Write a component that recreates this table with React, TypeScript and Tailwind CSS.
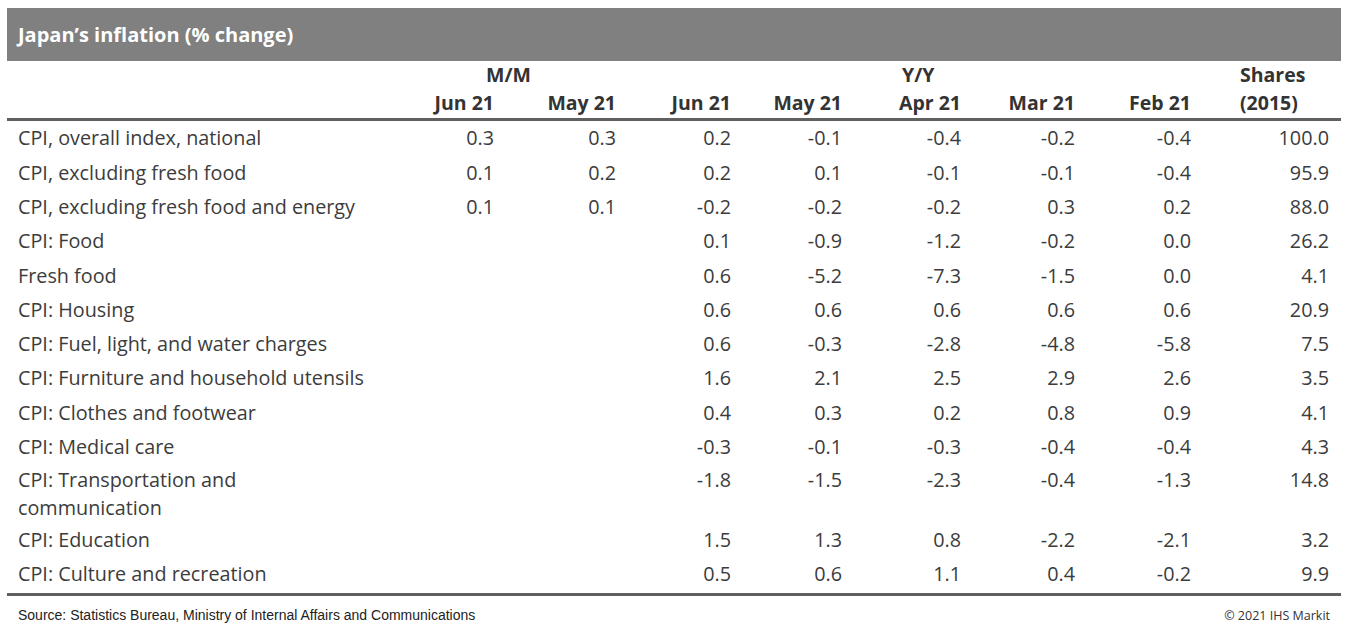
import React from 'react';

interface Row {
  label: React.ReactNode;
  mm: [string, string] | null;
  yy: [string, string, string, string, string];
  share: string;
  tall?: boolean;
}

const rows: Row[] = [
  { label: 'CPI, overall index, national', mm: ['0.3', '0.3'], yy: ['0.2', '-0.1', '-0.4', '-0.2', '-0.4'], share: '100.0' },
  { label: 'CPI, excluding fresh food', mm: ['0.1', '0.2'], yy: ['0.2', '0.1', '-0.1', '-0.1', '-0.4'], share: '95.9' },
  { label: 'CPI, excluding fresh food and energy', mm: ['0.1', '0.1'], yy: ['-0.2', '-0.2', '-0.2', '0.3', '0.2'], share: '88.0' },
  { label: 'CPI: Food', mm: null, yy: ['0.1', '-0.9', '-1.2', '-0.2', '0.0'], share: '26.2' },
  { label: 'Fresh food', mm: null, yy: ['0.6', '-5.2', '-7.3', '-1.5', '0.0'], share: '4.1' },
  { label: 'CPI: Housing', mm: null, yy: ['0.6', '0.6', '0.6', '0.6', '0.6'], share: '20.9' },
  { label: 'CPI: Fuel, light, and water charges', mm: null, yy: ['0.6', '-0.3', '-2.8', '-4.8', '-5.8'], share: '7.5' },
  { label: 'CPI: Furniture and household utensils', mm: null, yy: ['1.6', '2.1', '2.5', '2.9', '2.6'], share: '3.5' },
  { label: 'CPI: Clothes and footwear', mm: null, yy: ['0.4', '0.3', '0.2', '0.8', '0.9'], share: '4.1' },
  { label: 'CPI: Medical care', mm: null, yy: ['-0.3', '-0.1', '-0.3', '-0.4', '-0.4'], share: '4.3' },
  { label: <>CPI: Transportation and<br />communication</>, mm: null, yy: ['-1.8', '-1.5', '-2.3', '-0.4', '-1.3'], share: '14.8', tall: true },
  { label: 'CPI: Education', mm: null, yy: ['1.5', '1.3', '0.8', '-2.2', '-2.1'], share: '3.2' },
  { label: 'CPI: Culture and recreation', mm: null, yy: ['0.5', '0.6', '1.1', '0.4', '-0.2'], share: '9.9' },
];

const cols = 'grid grid-cols-[382px_94px_122px_115px_111px_119px_114px_116px_138px]';

export default function App() {
  return (
    <div className="min-h-screen bg-white pt-[8px] font-['Open_Sans',sans-serif] text-[#3c3c3c]">
      <div className="ml-[7px] w-[1334px]">
        {/* Title bar */}
        <div className="flex h-[53px] items-center bg-[#808080] pl-[11px] text-[20px] font-bold text-white">
          Japan’s inflation (% change)
        </div>

        {/* Column headers */}
        <div className={`${cols} border-b-[3px] border-[#606060] pl-[11px] pr-[12px] pb-[1px] text-[19.5px] font-bold leading-[28px] text-[#333]`}>
          <div />
          <div className="col-span-2 pl-[86px]">M/M</div>
          <div />
          <div />
          <div className="pl-[60px]">Y/Y</div>
          <div />
          <div />
          <div className="pl-[49px]">Shares</div>

          <div />
          <div className="text-right">Jun 21</div>
          <div className="text-right">May 21</div>
          <div className="text-right">Jun 21</div>
          <div className="text-right">May 21</div>
          <div className="text-right">Apr 21</div>
          <div className="text-right">Mar 21</div>
          <div className="text-right">Feb 21</div>
          <div className="pl-[49px]">(2015)</div>
        </div>

        {/* Data rows */}
        <div className="border-b-[3px] border-[#606060] pb-[2px] pl-[11px] pr-[12px] text-[19.8px]">
          {rows.map((r, idx) => (
            <div
              key={idx}
              className={`${cols} ${r.tall ? 'py-[2px] pb-[1px] leading-[28px]' : 'py-[4.4px] leading-[25.5px]'}`}
            >
              <div className="whitespace-nowrap">{r.label}</div>
              <div className="text-right">{r.mm ? r.mm[0] : ''}</div>
              <div className="text-right">{r.mm ? r.mm[1] : ''}</div>
              {r.yy.map((v, i) => (
                <div key={i} className="text-right">{v}</div>
              ))}
              <div className="text-right">{r.share}</div>
            </div>
          ))}
        </div>

        {/* Footer */}
        <div className="flex items-center justify-between pl-[11px] pr-[11px] pt-[9px]">
          <span className="font-['Liberation_Sans',Arial,sans-serif] text-[14px] text-[#222]">
            Source: Statistics Bureau, Ministry of Internal Affairs and Communications
          </span>
          <span className="text-[12.5px] text-[#333]">© 2021 IHS Markit</span>
        </div>
      </div>
    </div>
  );
}
